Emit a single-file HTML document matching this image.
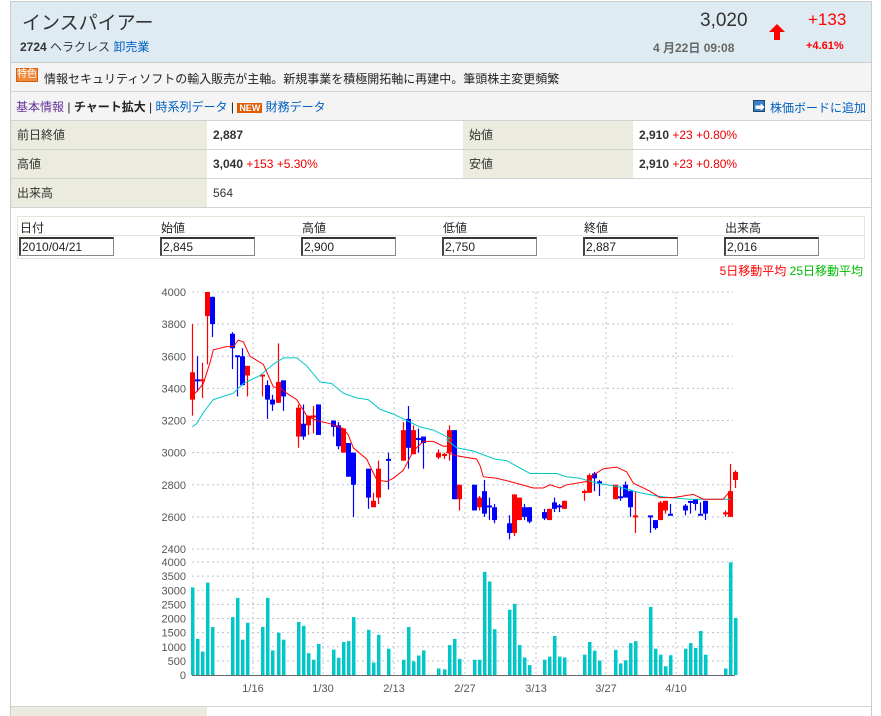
<!DOCTYPE html>
<html><head><meta charset="utf-8">
<style>
*{margin:0;padding:0;box-sizing:border-box}
html,body{width:881px;height:716px;overflow:hidden}
body{background:#fff;font-family:"Liberation Sans","Noto Sans CJK JP",sans-serif;font-size:12px;color:#333;position:relative}
.abs{position:absolute}
#wrap{position:absolute;left:10px;top:1px;width:862px;height:740px;border:1px solid #ccc}
.hdr{position:absolute;left:11px;top:2px;width:860px;height:61px;background:#dfebf2;border-bottom:1px solid #ccc}
.row{position:absolute;left:11px;width:860px;background:#f4f4f4;border-bottom:1px solid #d3d3d3}
.lab{position:absolute;background:#ebebdf;border-bottom:1px solid #d3d3d3;padding-left:6px;line-height:28px}
.val{position:absolute;border-bottom:1px solid #d3d3d3;padding-left:6px;line-height:28px}
.red{color:#e00}
a{color:#0060c0;text-decoration:none}
.inp{position:absolute;top:237px;width:95px;height:19px;border:1px solid #888;border-top:2px solid #333;border-left:2px solid #444;background:#fff;font-size:12px;line-height:16px;padding-left:1px;color:#222}
.th{position:absolute;top:219px;font-size:12px;color:#222}
</style></head><body>
<div id="wrap"></div>
<div class="hdr"></div>
<div class="abs" style="left:22px;top:8px;font-size:19px;color:#333">インスパイアー</div>
<div class="abs" style="left:20px;top:38px;font-size:12px"><b>2724</b> ヘラクレス <a>卸売業</a></div>
<div class="abs" style="left:700px;top:10px;font-size:19px;color:#333">3,020</div>
<svg class="abs" style="left:767px;top:22px" width="20" height="20" viewBox="0 0 20 20"><path d="M10 2 L18 10 L13 10 L13 18 L7 18 L7 10 L2 10 Z" fill="#f00"/></svg>
<div class="abs" style="left:808px;top:10px;font-size:17px;color:#f00">+133</div>
<div class="abs" style="left:653px;top:39px;font-size:12px;font-weight:bold;color:#666">4 月22日 09:08</div>
<div class="abs" style="left:806px;top:40px;font-size:11px;font-weight:bold;color:#f00">+4.61%</div>

<div class="row" style="top:63px;height:29px"></div>
<div class="abs" style="left:16px;top:68px;width:22px;height:14px;background:#f08a3a;border:1px solid #d06010;color:#fff;font-size:10px;line-height:12px;text-align:center">特色</div>
<div class="abs" style="left:44px;top:70px;font-size:12px;color:#222">情報セキュリティソフトの輸入販売が主軸。新規事業を積極開拓軸に再建中。筆頭株主変更頻繁</div>
<div class="row" style="top:92px;height:29px"></div>
<div class="abs" style="left:16px;top:98px;font-size:12px;color:#222"><span style="color:#639">基本情報</span> | <b>チャート拡大</b> | <a>時系列データ</a> | <span style="background:#e05a00;color:#fff;font-size:9px;padding:0 2px;font-weight:bold">NEW</span> <a>財務データ</a></div>
<div class="abs" style="left:753px;top:100px;width:12px;height:12px;background:#3a80c8;border:1px solid #246"></div>
<div class="abs" style="left:755px;top:99px;color:#fff;font-size:10px">➡</div>
<div class="abs" style="left:770px;top:99px;font-size:12px"><a>株価ボードに追加</a></div>

<div class="lab" style="left:11px;top:121px;width:196px;height:29px">前日終値</div>
<div class="val" style="left:207px;top:121px;width:256px;height:29px"><b>2,887</b></div>
<div class="lab" style="left:463px;top:121px;width:170px;height:29px">始値</div>
<div class="val" style="left:633px;top:121px;width:238px;height:29px"><b>2,910</b> <span class="red">+23 +0.80%</span></div>
<div class="lab" style="left:11px;top:150px;width:196px;height:29px">高値</div>
<div class="val" style="left:207px;top:150px;width:256px;height:29px"><b>3,040</b> <span class="red">+153 +5.30%</span></div>
<div class="lab" style="left:463px;top:150px;width:170px;height:29px">安値</div>
<div class="val" style="left:633px;top:150px;width:238px;height:29px"><b>2,910</b> <span class="red">+23 +0.80%</span></div>
<div class="lab" style="left:11px;top:179px;width:196px;height:29px">出来高</div>
<div class="val" style="left:207px;top:179px;width:664px;height:29px">564</div>

<div class="abs" style="left:17px;top:216px;width:848px;height:43px;border:1px solid #e4e4d8"></div>
<div class="abs" style="left:17px;top:235px;width:848px;height:1px;background:#e4e4d8"></div>
<div class="th" style="left:20px">日付</div><div class="th" style="left:161px">始値</div><div class="th" style="left:302px">高値</div><div class="th" style="left:443px">低値</div><div class="th" style="left:584px">終値</div><div class="th" style="left:725px">出来高</div>
<div class="inp" style="left:19px">2010/04/21</div><div class="inp" style="left:160px">2,845</div><div class="inp" style="left:301px">2,900</div><div class="inp" style="left:442px">2,750</div><div class="inp" style="left:583px">2,887</div><div class="inp" style="left:724px">2,016</div>
<div class="abs" style="left:705px;top:262px;width:158px;text-align:right;font-size:12px;white-space:nowrap"><span style="color:#f00">5日移動平均</span> <span style="color:#0b0">25日移動平均</span></div>

<svg id="ch" class="abs" style="left:0;top:0" width="881" height="716"></svg>

<div class="abs" style="left:11px;top:706px;width:860px;height:1px;background:#d3d3d3"></div>
<div class="abs" style="left:11px;top:707px;width:196px;height:12px;background:#ebebdf"></div>

<script>
var svg=document.getElementById('ch'),out='';
function py(p){return 292+(4000-p)*257/1600}
function vy(v){return 675-v*113/4000}
var X0=192,X1=733,vx=[253,323,394,465,536,606,676];
for(var p=4000;p>=2400;p-=200){var y=py(p);out+='<line x1="'+X0+'" x2="'+X1+'" y1="'+y+'" y2="'+y+'" stroke="#b8c4d4" stroke-dasharray="2,3"/>';out+='<text x="186" y="'+(y+4)+'" text-anchor="end" font-size="11" fill="#555" font-family="Liberation Sans">'+p+'</text>'}
for(var v=0;v<=4000;v+=500){var y=vy(v);if(v>0)out+='<line x1="'+X0+'" x2="'+X1+'" y1="'+y+'" y2="'+y+'" stroke="#b8c4d4" stroke-dasharray="2,3"/>';out+='<text x="186" y="'+(y+4)+'" text-anchor="end" font-size="11" fill="#555" font-family="Liberation Sans">'+v+'</text>'}
vx.forEach(function(x){out+='<line x1="'+x+'" x2="'+x+'" y1="292" y2="549" stroke="#b8c4d4" stroke-dasharray="2,3"/><line x1="'+x+'" x2="'+x+'" y1="562" y2="675" stroke="#b8c4d4" stroke-dasharray="2,3"/>'});
out+='<line x1="'+X0+'" x2="'+(X1+2)+'" y1="675.5" y2="675.5" stroke="#666"/>';
var lb=['1/16','1/30','2/13','2/27','3/13','3/27','4/10'];
lb.forEach(function(t,i){out+='<text x="'+vx[i]+'" y="692" text-anchor="middle" font-size="11" fill="#555" font-family="Liberation Sans">'+t+'</text>'});
var D=[
[0,3330,3800,3230,3500,3100],[1,3450,3600,3380,3450,1280],[2,3450,3560,3340,3450,830],[3,3850,4000,3550,4000,3270],[4,3970,3970,3720,3800,1700],
[8,3740,3750,3520,3650,2050],[9,3600,3600,3350,3600,2730],[10,3600,3650,3420,3420,1250],[11,3480,3540,3350,3540,1850],
[14,3480,3480,3350,3475,1700],[15,3420,3450,3210,3330,2730],[16,3330,3360,3260,3300,870],[17,3310,3680,3310,3440,1500],[18,3450,3450,3260,3350,1250],
[21,3100,3300,3030,3280,1880],[22,3180,3300,3080,3100,1740],[23,3170,3230,3110,3230,770],[24,3225,3290,3120,3215,540],[25,3300,3300,3110,3110,1100],
[28,3200,3200,3100,3160,900],[29,3170,3190,3020,3040,610],[30,3000,3150,3000,3150,1170],[31,3060,3060,2850,2850,1200],[32,3000,3000,2600,2800,2050],
[35,2900,2900,2650,2720,1600],[36,2660,2750,2660,2700,440],[37,2720,2950,2680,2900,1420],[39,2950,3000,2770,2955,930],
[42,2950,3190,2950,3140,540],[43,3210,3290,2900,3030,1700],[44,2990,3170,2990,3140,480],[45,3075,3150,3000,3085,690],[46,3100,3100,2900,3060,870],
[49,2970,3020,2960,3000,230],[50,2985,3000,2960,2975,200],[51,3000,3170,2950,3140,1060],[52,3140,3140,2710,2710,1280],[53,2710,2800,2640,2800,570],
[56,2800,2800,2640,2640,540],[57,2660,2730,2640,2720,540],[58,2760,2830,2600,2620,3650],[59,2665,2720,2580,2655,3310],[60,2660,2680,2560,2580,1620],
[63,2560,2610,2460,2500,2310],[64,2500,2740,2480,2740,2520],[65,2580,2720,2580,2720,1060],[66,2660,2680,2580,2600,620],[67,2660,2660,2560,2570,350],
[70,2630,2650,2580,2590,540],[71,2580,2650,2580,2650,650],[72,2690,2720,2630,2650,1380],[73,2655,2680,2630,2665,650],[74,2650,2700,2650,2700,620],
[78,2745,2770,2700,2755,720],[79,2750,2870,2750,2860,1170],[80,2870,2880,2760,2840,860],[81,2815,2830,2730,2805,510],
[84,2710,2800,2710,2800,890],[85,2718,2790,2700,2722,410],[86,2800,2820,2720,2720,520],[87,2760,2770,2600,2660,1130],[88,2598,2760,2500,2603,1200],
[91,2603,2600,2500,2598,2410],[92,2580,2580,2520,2530,930],[93,2580,2700,2580,2690,720],[94,2640,2700,2620,2700,310],[95,2608,2680,2610,2613,700],
[98,2670,2680,2610,2640,930],[99,2693,2700,2620,2688,1130],[100,2710,2710,2640,2680,960],[101,2613,2690,2610,2608,1560],[102,2700,2700,2580,2620,720],
[106,2618,2640,2600,2622,230],[107,2600,2930,2600,2760,3990],[108,2830,2890,2780,2880,2020]];
D.forEach(function(d){
 var x=Math.round(192+d[0]*5.03);
 var up=d[4]>=d[1];
 var c=up?'#f00':'#00f';
 if(Math.abs(d[1]-d[4])<12){c=(d[0]%2)?'#00f':'#f00';}
 out+='<line x1="'+(x+0.5)+'" x2="'+(x+0.5)+'" y1="'+py(d[2])+'" y2="'+py(d[3])+'" stroke="'+c+'" stroke-width="1.2"/>';
 var t=py(Math.max(d[1],d[4])),b=py(Math.min(d[1],d[4]));if(b-t<2){t-=1;b=t+2}
 out+='<rect x="'+(x-2)+'" y="'+t+'" width="5" height="'+(b-t)+'" fill="'+c+'"/>';
 out+='<rect x="'+(x-1)+'" y="'+vy(d[5])+'" width="3.5" height="'+(675-vy(d[5]))+'" fill="#00c8c8"/>';
});
function pl(a,b,col){var s=[];a.forEach(function(q){s.push((150+q[0]/3).toFixed(1)+','+py(q[1]).toFixed(1))});b.forEach(function(q){s.push((440+q[0]/3).toFixed(1)+','+py(q[1]).toFixed(1))});out+='<polyline points="'+s.join(' ')+'" fill="none" stroke="'+col+'" stroke-width="1"/>'}
pl([[127,3160],[140,3180],[160,3250],[190,3330],[250,3370],[280,3430],[330,3480],[370,3550],[400,3590],[440,3590],[470,3540],[510,3440],[545,3430],[580,3370],[620,3340],[655,3330],[690,3270],[730,3240],[770,3200],[810,3160],[850,3140],[900,3090]],
[[20,3080],[50,3030],[100,3010],[165,2960],[200,2950],[270,2870],[350,2870],[380,2850],[420,2840],[470,2810],[530,2790],[600,2750],[650,2730],[690,2720],[750,2710],[870,2710]],'#00c8c8');
pl([[127,3350],[140,3380],[160,3430],[180,3560],[190,3640],[230,3660],[250,3660],[265,3700],[280,3690],[300,3600],[340,3550],[370,3410],[390,3400],[410,3370],[440,3330],[470,3230],[500,3200],[540,3180],[580,3150],[595,3110],[610,3030],[650,2960],[680,2830],[710,2820],[730,2840],[760,2890],[790,3010],[820,3070],[850,3070],[880,3040],[900,3040]],
[[20,3000],[50,2980],[110,2960],[120,2920],[130,2850],[170,2840],[210,2820],[280,2780],[310,2780],[330,2800],[360,2780],[380,2800],[440,2820],[460,2860],[490,2900],[530,2910],[560,2880],[580,2810],[630,2760],[660,2720],[700,2720],[760,2740],[790,2710],[850,2710],[870,2760]],'#f00');
svg.innerHTML=out;
</script>
</body></html>
